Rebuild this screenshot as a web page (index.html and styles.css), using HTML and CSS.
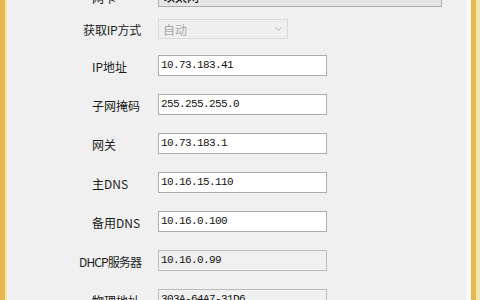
FILE: index.html
```html
<!DOCTYPE html>
<html lang="zh-CN">
<head>
<meta charset="utf-8">
<link rel="stylesheet" href="styles.css">
</head>
<body>
<div class="window">
  <div class="frame frame-left"><span class="gold"></span><span class="pale"></span></div>
  <div class="content">
    <div class="form">
      <div class="row">
        <span class="label">网卡</span>
        <div class="combo combo-top"><span class="combo-text">以太网</span><svg class="chev" width="7" height="4" viewBox="0 0 7 4"><path d="M0.5 0.5 L3.5 3.5 L6.5 0.5" fill="none" stroke="#444" stroke-width="1"/></svg></div>
      </div>
      <div class="row row-first">
        <span class="label wide">获取IP方式</span>
        <div class="combo combo-disabled"><span class="combo-text">自动</span><svg class="chev" width="7" height="4" viewBox="0 0 7 4"><path d="M0.5 0.5 L3.5 3.5 L6.5 0.5" fill="none" stroke="#b4b4b4" stroke-width="1"/></svg></div>
      </div>
      <div class="row">
        <span class="label">IP地址</span>
        <div class="field">10.73.183.41</div>
      </div>
      <div class="row">
        <span class="label">子网掩码</span>
        <div class="field">255.255.255.0</div>
      </div>
      <div class="row">
        <span class="label">网关</span>
        <div class="field">10.73.183.1</div>
      </div>
      <div class="row">
        <span class="label">主DNS</span>
        <div class="field">10.16.15.110</div>
      </div>
      <div class="row">
        <span class="label">备用DNS</span>
        <div class="field">10.16.0.100</div>
      </div>
      <div class="row">
        <span class="label wide tight">DHCP服务器</span>
        <div class="field readonly">10.16.0.99</div>
      </div>
      <div class="row">
        <span class="label">物理地址</span>
        <div class="field readonly">303A-64A7-31D6</div>
      </div>
    </div>
  </div>
  <div class="frame frame-right"><span class="white"></span><span class="gold"></span><span class="pale"></span></div>
</div>
</body>
</html>
```
FILE: styles.css
```css
* { box-sizing: border-box; }
html, body { margin: 0; padding: 0; }
body {
  width: 480px;
  height: 300px;
  overflow: hidden;
  background: #f0f0f0;
  font-family: "Noto Sans CJK SC", "Noto Sans", sans-serif;
}
.window {
  display: flex;
  height: 300px;
  overflow: hidden;
}
.frame { display: flex; height: 100%; flex: none; }
.frame .gold { width: 5px; background: #e5b84f; }
.frame .pale { background: #f6e4ad; }
.frame-left .pale { width: 2px; }
.frame-right .white { width: 5px; background: #f9f9f9; }
.frame-right .gold { width: 5px; }
.frame-right .pale { width: 4px; }
.content {
  flex: 1;
  background: #f0f0f0;
}
.form {
  display: flex;
  flex-direction: column;
  gap: 18px;
  margin-top: -14px;
  padding-left: 73px;
}
.row {
  display: flex;
  align-items: center;
  height: 21px;
}
.row-first { margin-top: -6px; height: 20px; margin-bottom: -2px; }
.label {
  display: flex;
  width: 61px;
  padding-left: 12px;
  margin-right: 17px;
  font-size: 12px;
  line-height: 14px;
  color: #1c1c1c;
  white-space: nowrap;
  position: relative;
  top: 1px;
}
.label.wide {
  padding-left: 0;
  justify-content: flex-end;
  letter-spacing: -0.2px;
}
.label.tight { letter-spacing: -0.9px; }
.field {
  width: 169px;
  height: 21px;
  border: 1px solid #acacac;
  background: #fff;
  font-family: "Liberation Mono", monospace;
  font-size: 11px;
  letter-spacing: -0.6px;
  line-height: 19px;
  padding-left: 2px;
  color: #111;
  white-space: nowrap;
}
.field.readonly {
  background: #f0f0f0;
  border-color: #bdbdbd;
}
.combo {
  display: flex;
  align-items: center;
  justify-content: space-between;
  height: 100%;
  border: 1px solid #acacac;
  font-size: 12px;
  padding: 0 5px 0 4px;
}
.combo-top {
  width: 284px;
  background: #e6e6e6;
  color: #000;
}
.combo-disabled {
  width: 130px;
  background: #efefef;
  border-color: #dadada;
  color: #a8a8a8;
}
.chev { flex: none; }
```
